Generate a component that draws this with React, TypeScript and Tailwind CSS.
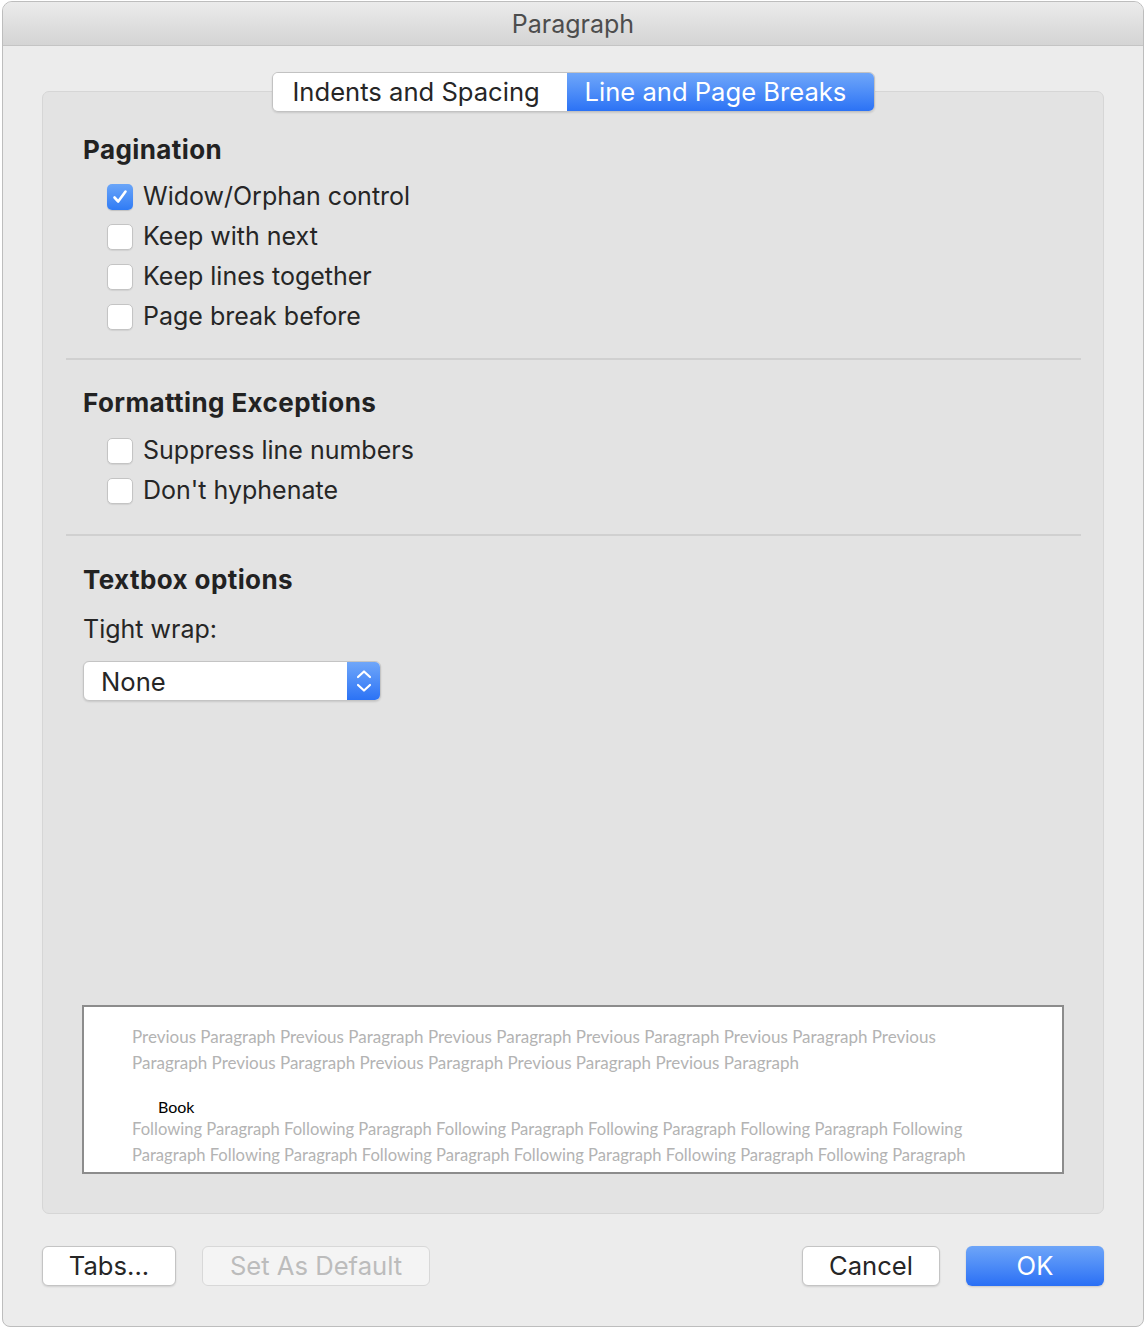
import React from "react";

const ui = { fontFamily: "Inter, 'Helvetica Neue', Arial, sans-serif" };
const preview = { fontFamily: "Lato, 'Open Sans', sans-serif" };

const Check = ({ checked, label }: { checked?: boolean; label: string }) => (
  <div className="flex h-[40px] items-center">
    {checked ? (
      <div className="flex h-[26px] w-[26px] items-center justify-center rounded-[5px] bg-gradient-to-b from-[#6aa5f8] to-[#2f7bf5] shadow-[0_1px_1px_rgba(0,0,0,0.15)]">
        <svg width="18" height="18" viewBox="0 0 18 18" fill="none">
          <path d="M3.5 9.5 L7.2 13.5 L14.5 3.5" stroke="white" strokeWidth="2.6" strokeLinecap="round" strokeLinejoin="round" />
        </svg>
      </div>
    ) : (
      <div className="h-[26px] w-[26px] rounded-[5px] border border-[#c4c4c4] bg-white shadow-[0_1px_1px_rgba(0,0,0,0.08)]" />
    )}
    <span className="ml-[10px] text-[25px] text-[#262626]">{label}</span>
  </div>
);

const Heading = ({ children }: { children: React.ReactNode }) => (
  <div className="flex h-[32px] items-center pl-[40px] text-[26px] font-bold tracking-[0.4px] text-[#222]">{children}</div>
);

const Divider = () => <div className="ml-[23px] mr-[22px] h-[2px] bg-[#d0d0d0]" />;

export default function App() {
  return (
    <div className="relative h-[1328px] w-[1148px] overflow-hidden bg-white" style={ui}>
      <div className="ml-[2px] mt-[1px] flex h-[1326px] w-[1142px] flex-col overflow-hidden rounded-t-[10px] rounded-b-[8px] border border-[#bdbdbd] bg-[#ececec]">
        {/* title bar */}
        <div className="flex h-[44px] shrink-0 items-center justify-center border-b border-[#c4c4c4] bg-gradient-to-b from-[#ebebeb] to-[#d4d4d4] pt-[2px] text-[25px] text-[#4d4d4d]">
          Paragraph
        </div>

        <div className="flex flex-1 flex-col px-[39px] pt-[26px]">
          {/* segmented tabs */}
          <div className="relative z-10 -mb-[21px] flex justify-center">
            <div className="flex h-[40px] overflow-hidden rounded-[6px] border border-[#c2c2c2] shadow-[0_1px_2px_rgba(0,0,0,0.12)]">
              <div className="flex w-[294px] items-center bg-white pl-[20px] text-[25.6px] text-[#262626]">Indents and Spacing</div>
              <div className="flex w-[307px] items-center bg-gradient-to-b from-[#6fa6f9] to-[#2b72f5] pl-[18px] text-[25.6px] text-white">
                Line and Page Breaks
              </div>
            </div>
          </div>

          {/* panel */}
          <div className="flex h-[1123px] flex-col rounded-[7px] border border-[#d6d6d6] bg-[#e3e3e3] pt-[41px]">
            <Heading>Pagination</Heading>
            <div className="mt-[12px] pl-[64px]">
              <Check checked label="Widow/Orphan control" />
              <Check label="Keep with next" />
              <Check label="Keep lines together" />
              <Check label="Page break before" />
            </div>
            <div className="mt-[21px]">
              <Divider />
            </div>
            <div className="mt-[26px]">
              <Heading>Formatting Exceptions</Heading>
            </div>
            <div className="mt-[13px] pl-[64px]">
              <Check label="Suppress line numbers" />
              <Check label="Don't hyphenate" />
            </div>
            <div className="mt-[23px]">
              <Divider />
            </div>
            <div className="mt-[27px]">
              <Heading>Textbox options</Heading>
            </div>
            <div className="mt-[19px] flex h-[32px] items-center pl-[40px] text-[25px] text-[#262626]">Tight wrap:</div>
            <div className="mt-[15px] pl-[40px]">
              <div className="flex h-[40px] w-[298px] overflow-hidden rounded-[6px] border border-[#c4c4c4] bg-white shadow-[0_1px_2px_rgba(0,0,0,0.12)]">
                <div className="flex flex-1 items-center pl-[17px] pt-[2px] text-[25.6px] text-[#262626]">None</div>
                <div className="flex w-[33px] items-center justify-center bg-gradient-to-b from-[#6fa6f9] to-[#2b72f5]">
                  <svg width="18" height="28" viewBox="0 0 18 28" fill="none">
                    <path d="M3 10 L9 4.5 L15 10" stroke="white" strokeWidth="2.2" strokeLinecap="round" strokeLinejoin="round" />
                    <path d="M3 18 L9 23.5 L15 18" stroke="white" strokeWidth="2.2" strokeLinecap="round" strokeLinejoin="round" />
                  </svg>
                </div>
              </div>
            </div>

            {/* preview */}
            <div className="mt-auto px-[39px] pb-[39px]">
              <div className="h-[169px] border-2 border-[#8c8c8c] bg-white pl-[48px] pt-[17px] text-[17px] leading-[26px] text-[#b3b3b3]" style={preview}>
                <div className="whitespace-nowrap">
                  Previous Paragraph Previous Paragraph Previous Paragraph Previous Paragraph Previous Paragraph Previous
                </div>
                <div className="whitespace-nowrap">
                  Paragraph Previous Paragraph Previous Paragraph Previous Paragraph Previous Paragraph
                </div>
                <div className="mt-[22px] pl-[26px] text-[16px] leading-[18px] text-black">Book</div>
                <div className="whitespace-nowrap text-[16.6px]">
                  Following Paragraph Following Paragraph Following Paragraph Following Paragraph Following Paragraph Following
                </div>
                <div className="whitespace-nowrap text-[16.6px]">
                  Paragraph Following Paragraph Following Paragraph Following Paragraph Following Paragraph Following Paragraph
                </div>
              </div>
            </div>
          </div>

          {/* buttons */}
          <div className="mt-[32px] flex items-center">
            <div className="flex h-[40px] w-[134px] items-center justify-center rounded-[6px] border border-[#c4c4c4] bg-white text-[25.6px] text-[#262626] shadow-[0_1px_2px_rgba(0,0,0,0.12)]">
              Tabs...
            </div>
            <div className="ml-[26px] flex h-[40px] w-[228px] items-center justify-center rounded-[6px] border border-[#d8d8d8] bg-[#f4f4f4] text-[25.6px] text-[#bcbcbc]">
              Set As Default
            </div>
            <div className="ml-auto flex h-[40px] w-[138px] items-center justify-center rounded-[6px] border border-[#c4c4c4] bg-white text-[25.6px] text-[#262626] shadow-[0_1px_2px_rgba(0,0,0,0.12)]">
              Cancel
            </div>
            <div className="ml-[26px] flex h-[40px] w-[138px] items-center justify-center rounded-[6px] bg-gradient-to-b from-[#6ea5f8] to-[#2a6ff5] text-[25.6px] text-white shadow-[0_1px_2px_rgba(0,0,0,0.15)]">
              OK
            </div>
          </div>
        </div>
      </div>
    </div>
  );
}
